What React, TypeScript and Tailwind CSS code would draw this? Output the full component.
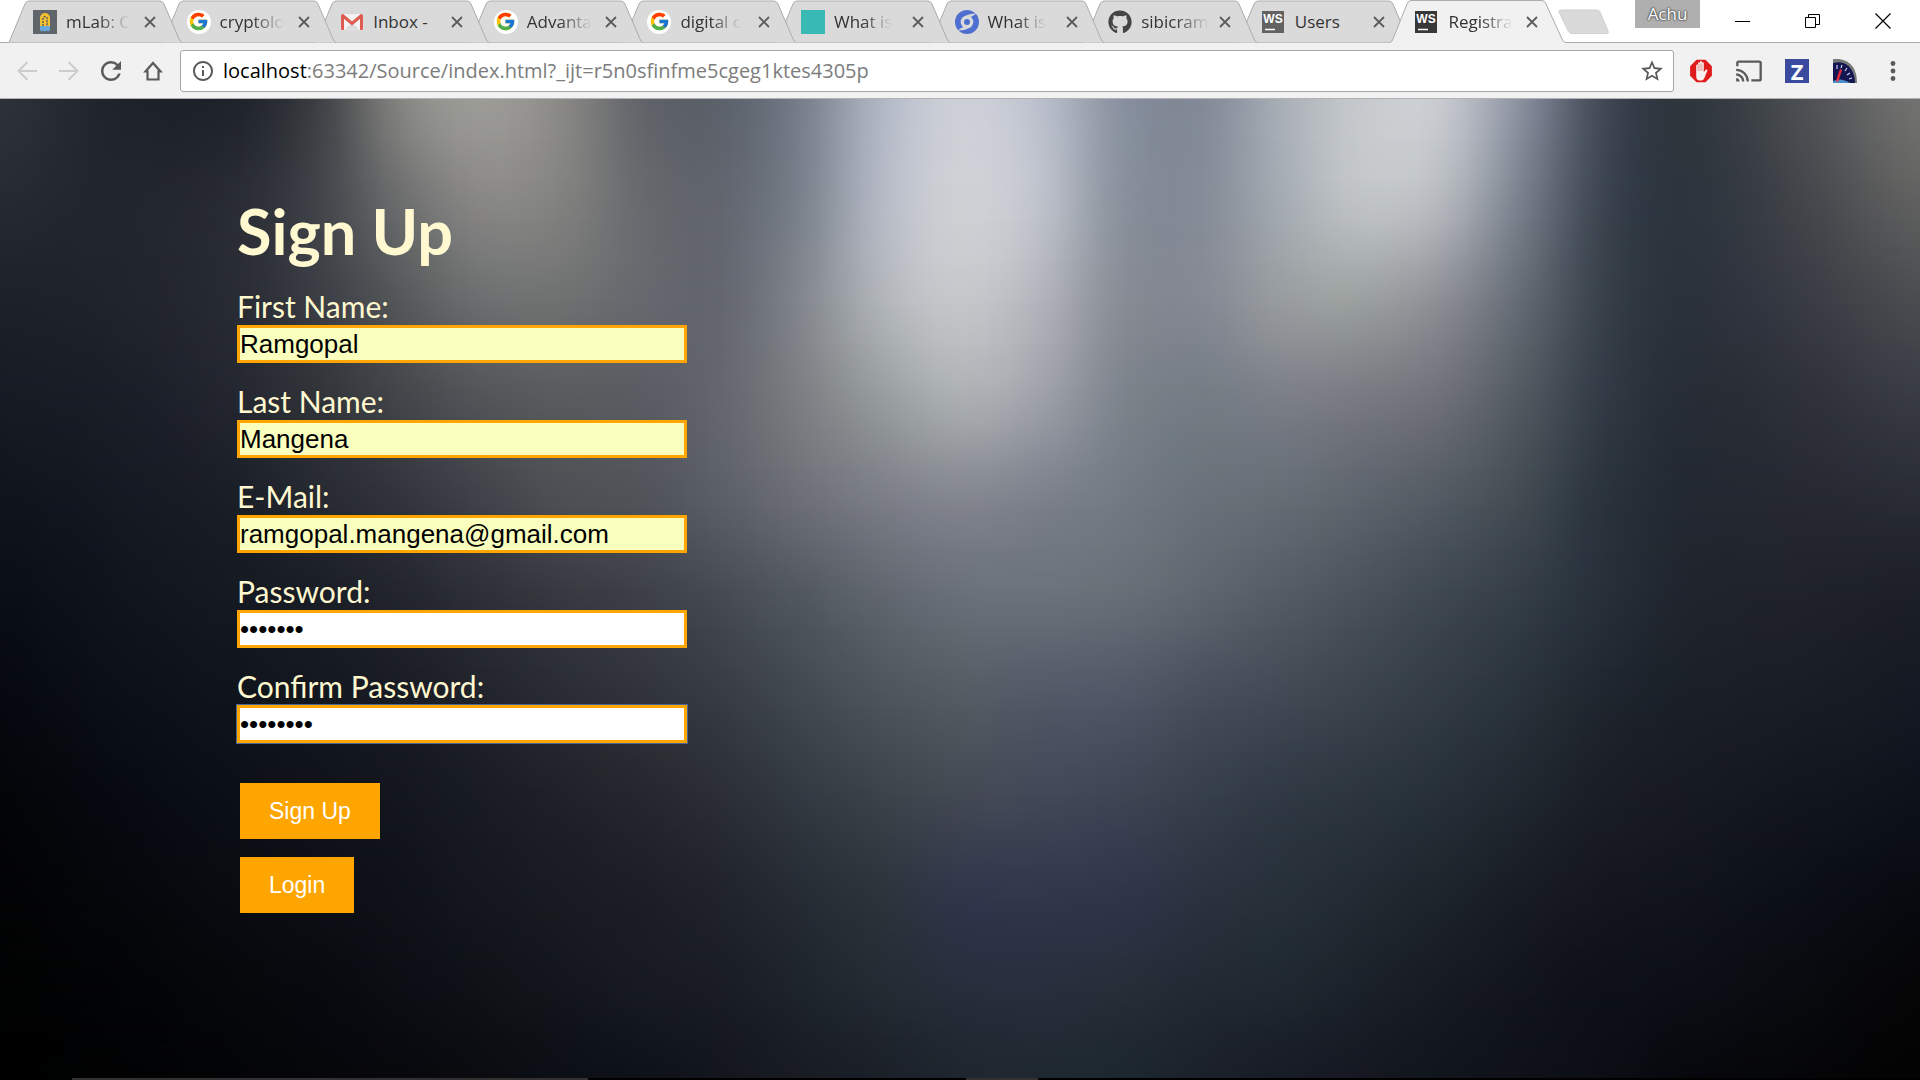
import type { CSSProperties, ReactNode } from "react";
import { FaGithub } from "react-icons/fa";
import { FcGoogle } from "react-icons/fc";
import { MdCast, MdInfoOutline, MdRefresh, MdStarBorder } from "react-icons/md";

/* Backdrop: a mesh of colours, smoothed across and down with a Catmull-Rom curve. */
const meshX = [0, 120, 240, 320, 400, 480, 560, 640, 720, 800, 880, 960, 1040, 1120, 1200, 1280, 1360, 1440, 1520, 1600, 1680, 1800, 1920];
const meshRows = [
  { y: 98, colors: "2e3239 1f232b 20242b 3e4145 858581 9d9c98 8b8a87 62656a 5c626b 767e8a b0b7c3 ced0d9 bbc0cc 8a92a0 828a98 a8aeb6 c6cacd c8cbd0 8b919f 434b58 2e363d 4c4f53 737371" },
  { y: 200, colors: "262a32 22262e 2a2d35 42454a 6c6d6e 888785 828280 686a6e 62666f 7a818b b4b9c4 cfd1d5 bfc3cc 8a929d 858c97 a4abb2 c0c4c6 b6babf 79818c 3d4651 2d353e 42454a 616160" },
  { y: 300, colors: "1d2129 20242c 292c34 3b3e44 555859 6c6e6f 6f7171 66696e 646770 82868d b0b4b9 c5c7ca b2b4bb 898d96 858993 989c9f 9ba09f 8c8e95 646b74 39424b 2b323c 383b43 4a4d50" },
  { y: 400, colors: "171b24 1a1e27 242730 313439 424549 515457 585b5c 595c62 64676e 7b7e82 969b9b abafb1 9ea1a9 7d848c 747c84 7a7e87 777981 6e7078 525a61 333c46 272d36 2e3139 383b44" },
  { y: 500, colors: "10141c 151922 1b1f27 272a32 31343b 40424a 4c4f53 505359 5b5f66 6c6f76 7a7d86 82858e 7b808a 727a83 69717a 656d75 5d646c 525a62 424b52 2b343d 232932 262932 292c35" },
  { y: 600, colors: "0a0e16 10141c 151921 1a1e26 22252d 2c2f36 35383f 3c3f46 454a52 51575e 5f656d 686f78 6a717a 666e76 5d656e 535b64 49515a 3e4750 343d46 27303a 20252d 1f2229 1c1f27" },
  { y: 700, colors: "060910 0c1017 10141c 14181f 191c24 21242b 292c33 30333a 373c43 41484f 4c545b 535b62 525866 505665 474e5b 414954 3a434c 323b44 29323a 1f262e 1b2028 191d25 151923" },
  { y: 800, colors: "030508 070a11 0c1017 10131a 13161e 191c23 1f2129 25272e 2b2e35 323941 3b4249 424852 424857 3e4453 363f4a 303943 2c353e 262f38 20272f 1a1e26 171a22 12161e 0e121a" },
  { y: 900, colors: "020304 05070b 090c11 0c0f15 0f1219 14171e 181b22 1c1e26 20232b 262c34 2c333b 30364a 31374a 2f354a 2b323f 273039 222a32 1d242b 181c24 14161f 11141c 0c0f17 080a10" },
  { y: 990, colors: "010202 030406 06080b 080a0f 0b0e14 0f1218 13161c 171a22 1a1d25 1e242c 242b33 272e3b 282f3d 262e38 222a34 1f2830 1b222a 171b22 12151d 0e1119 0c0f16 090b0f 060607" },
  { y: 1080, colors: "000000 010203 040507 06070a 08090d 0a0c10 0c0f16 0e121a 13161d 181c23 1b2028 1e262e 1f2830 1d2730 1b212a 181c26 151821 11151d 0f1219 0b0e15 08090e 050608 030304" },
].map((r) => ({ y: r.y, colors: r.colors.split(" ").map((c) => [0, 2, 4].map((k) => parseInt(c.slice(k, k + 2), 16))) }));

const meshTop = 98;
const meshBottom = 1080;
const meshWidth = 1920;

function curve(xs: number[], vs: number[][], x: number): number[] {
  let i = 0;
  while (i < xs.length - 2 && x > xs[i + 1]) i++;
  const t = (x - xs[i]) / (xs[i + 1] - xs[i]);
  const a = vs[Math.max(i - 1, 0)];
  const b = vs[i];
  const c = vs[i + 1];
  const d = vs[Math.min(i + 2, vs.length - 1)];
  return b.map((_, k) => {
    const v =
      b[k] +
      0.5 * t * (c[k] - a[k] + t * (2 * a[k] - 5 * b[k] + 4 * c[k] - d[k] + t * (3 * (b[k] - c[k]) + d[k] - a[k])));
    return Math.max(0, Math.min(255, v));
  });
}

const bands: CSSProperties[] = [];
const bandCount = 24;
for (let n = 0; n <= bandCount; n++) {
  const y = meshTop + ((meshBottom - meshTop) * n) / bandCount;
  const row = meshX.map((_, col) => curve(meshRows.map((r) => r.y), meshRows.map((r) => r.colors[col]), y));
  const stops: string[] = [];
  for (let x = 0; x <= meshWidth; x += 24) {
    const [r, g, b] = curve(meshX, row, x).map((v) => Math.round(v));
    stops.push(`rgb(${r} ${g} ${b}) ${((x / meshWidth) * 100).toFixed(2)}%`);
  }
  const style: CSSProperties = { backgroundImage: `linear-gradient(to right, ${stops.join(", ")})` };
  if (n > 0) {
    const from = (((n - 1) / bandCount) * 100).toFixed(3);
    const to = ((n / bandCount) * 100).toFixed(3);
    style.maskImage = `linear-gradient(to bottom, transparent ${from}%, black ${to}%)`;
  }
  bands.push(style);
}

function Backdrop() {
  return (
    <div aria-hidden="true" className="absolute inset-0 overflow-hidden">
      {bands.map((style, i) => (
        <div key={i} className="absolute inset-0" style={style} />
      ))}
    </div>
  );
}

/* Site icons */
function MLabIcon() {
  return (
    <svg viewBox="0 0 24 24" className="size-6">
      <rect width="24" height="24" fill="#5f656b" />
      <path d="M7 17V8a5 5 0 0 1 10 0v9z" fill="#f6c12f" />
      <path d="M10 16V8.500a2 2 0 0 1 4 0V16" fill="none" stroke="#59605f" strokeWidth="1.500" strokeDasharray="2 1" />
      <path d="M7 16h10v4l-1.500 1.500-1.500-1-2 1-2-1-1.500 1L7 20z" fill="#67a9dc" />
    </svg>
  );
}

function GoogleIcon() {
  return (
    <span className="flex size-6 items-center justify-center rounded-full bg-white">
      <FcGoogle size={21} />
    </span>
  );
}

function GmailIcon() {
  return (
    <svg viewBox="0 0 24 24" className="size-6">
      <path d="M2 4h20v16H2z" fill="#f3f1f1" />
      <path d="M5 19.500 12 13l7 6.500z" fill="#dcdada" />
      <path d="M2.500 5.500 12 13.500l9.500-8" fill="none" stroke="#dd5b50" strokeWidth="3" />
      <path d="M1 5.500Q1 4 3 4l1 1v15H2.500Q1 20 1 18.500zM23 5.500Q23 4 21 4l-1 1v15h1.500q1.500 0 1.500-1.500z" fill="#dd5b50" />
    </svg>
  );
}

function SwirlIcon() {
  return (
    <svg viewBox="0 0 24 24" className="size-6">
      <circle cx="12" cy="12" r="12" fill="#4f6fd0" />
      <path d="M21.500 3.500Q13 3.500 8.500 7L12 8.500Q16.500 7 21.500 3.500zM2.500 20.500Q11 20.500 15.500 17L12 15.500Q7.500 17 2.500 20.500z" fill="#dadada" />
      <circle cx="12" cy="12" r="6.300" fill="#dadada" />
      <circle cx="12" cy="12" r="3" fill="#4f6fd0" />
    </svg>
  );
}

function WebStormIcon({ active = false }: { active?: boolean }) {
  return (
    <svg viewBox="0 0 24 24" className="size-6">
      <rect y="1" width="22" height="22" fill={active ? "#383838" : "#626262"} />
      <text x="11" y="13" textAnchor="middle" fontFamily="Liberation Sans, sans-serif" fontWeight="700" fontSize="12" fill="#fff">
        WS
      </text>
      <path d="M3 19.500h10" stroke="#fff" strokeWidth="1.500" />
    </svg>
  );
}

const tabs: { title: string; icon: ReactNode; active?: boolean; fade?: boolean }[] = [
  { title: "mLab: C", icon: <MLabIcon />, fade: true },
  { title: "cryptolo", icon: <GoogleIcon />, fade: true },
  { title: "Inbox -", icon: <GmailIcon /> },
  { title: "Advanta", icon: <GoogleIcon />, fade: true },
  { title: "digital c", icon: <GoogleIcon />, fade: true },
  { title: "What is", icon: <span className="block size-6 bg-[#38b9b3]" />, fade: true },
  { title: "What is", icon: <SwirlIcon />, fade: true },
  { title: "sibicram", icon: <FaGithub size={24} color="#444" />, fade: true },
  { title: "Users", icon: <WebStormIcon /> },
  { title: "Registra", icon: <WebStormIcon active />, active: true, fade: true },
];

const stackOrder = ["z-[9]", "z-[8]", "z-[7]", "z-[6]", "z-[5]", "z-[4]", "z-[3]", "z-[2]", "z-[1]", "z-10"];

function Tab({ index }: { index: number }) {
  const { title, icon, active, fade } = tabs[index];
  return (
    <div className={`relative flex h-[43px] items-center pl-[25px] ${stackOrder[index]}`}>
      <svg viewBox="0 0 176 43" className="absolute left-0 top-0 h-[43px] w-44" aria-hidden="true">
        <path
          d={active ? "M0 43V42.500Q2 42 3 39L17 4Q18.500.5 21 .5H152Q154.500.5 156 4L172 39Q173.500 42.500 176 42.500V43z" : "M0 42.500Q1 42 2 39L17 4Q18.500 1 21 1H152Q154.500 1 156 4L171 39Q173 42.500 175 42.500z"}
          fill={active ? "#f1f1f1" : "#dadada"}
        />
        <path
          d={active ? "M0 42.500Q2 42 3 39L17 4Q18.500.5 21 .5H152Q154.500.5 156 4L172 39Q173.500 42.500 176 42.500" : "M1 42.500L17 4Q18.500 1 21 1H152Q154.500 1 156 4L171 39Q172.500 42.500 174 42.500"}
          fill="none"
          stroke="#acacac"
        />
      </svg>
      <span className="relative shrink-0">{icon}</span>
      <span className="relative ml-[9px] flex w-[74px] whitespace-nowrap text-[17px] leading-6 text-[#333]">
        <span className={fade ? "[mask-image:linear-gradient(to_right,black_50%,transparent)]" : ""}>{title}</span>
      </span>
      <button type="button" aria-label={`Close ${title}`} className="relative flex size-5 shrink-0 items-center justify-center">
        <svg viewBox="0 0 12 12" className="size-3" stroke="#5c5c5c" strokeWidth="1.800">
          <path d="M1 1l10 10M11 1L1 11" />
        </svg>
      </button>
    </div>
  );
}

function TabStrip() {
  return (
    <div className="relative flex h-[43px] border-b border-[#acacac] bg-white">
      <div className="ml-2 grid h-[43px] w-4/5 shrink-0 grid-cols-10">
        {tabs.map((_, i) => (
          <Tab key={i} index={i} />
        ))}
      </div>
      <button type="button" aria-label="New tab" className="ml-[14px] mt-[9px] h-[26px] w-[52px]">
        <svg viewBox="0 0 52 26" className="h-[26px] w-[52px]">
          <path d="M3 1h36q2 0 3 2l8 19q1 2.500-1 2.500H14q-2.500 0-3.500-2L1 3Q.5 1 3 1z" fill="#dadada" stroke="#cfcfcf" />
        </svg>
      </button>
      <div className="ml-auto flex items-start pr-0.5">
        <button
          type="button"
          className="mr-2 h-7 w-[65px] bg-[#afafaf] text-[17px] leading-[26px] text-white [text-shadow:0_0_2px_#333,0_0_2px_#333]"
        >
          Achu
        </button>
        <button type="button" aria-label="Minimize" className="flex h-[41px] w-[70px] items-center justify-center">
          <svg viewBox="0 0 16 16" className="size-4" shapeRendering="crispEdges">
            <path d="M0 8h15v1H0z" />
          </svg>
        </button>
        <button type="button" aria-label="Restore" className="flex h-[41px] w-[70px] items-center justify-center">
          <svg viewBox="0 0 16 16" className="size-4" fill="none" stroke="#000">
            <path d="M.5 4.500h10v10H.5zM3.500 4V1.500h11v10H11" />
          </svg>
        </button>
        <button type="button" aria-label="Close window" className="flex h-[41px] w-[70px] items-center justify-center">
          <svg viewBox="0 0 16 16" className="size-4" fill="none" stroke="#000" strokeWidth="1.200">
            <path d="M.5.5l15 15M15.500.5l-15 15" />
          </svg>
        </button>
      </div>
    </div>
  );
}

function BarButton({ label, wide = false, children }: { label: string; wide?: boolean; children: ReactNode }) {
  return (
    <button type="button" aria-label={label} className={`flex h-10 shrink-0 items-center justify-center text-[#5a5a5a] ${wide ? "w-12" : "w-[42px]"}`}>
      {children}
    </button>
  );
}

function Toolbar() {
  return (
    <div className="flex h-14 items-center border-b border-[#b2b1b3] bg-[#f1f1f1] pl-1.5 pr-[3px]">
      <BarButton label="Back">
        <svg viewBox="0 0 20 20" className="size-5" fill="none" stroke="#ccc" strokeWidth="2">
          <path d="M20 10H1.500M10.500 1l-9 9 9 9" />
        </svg>
      </BarButton>
      <BarButton label="Forward">
        <svg viewBox="0 0 20 20" className="size-5" fill="none" stroke="#ccc" strokeWidth="2">
          <path d="M0 10h18.500M9.500 1l9 9-9 9" />
        </svg>
      </BarButton>
      <BarButton label="Reload">
        <MdRefresh size={30} />
      </BarButton>
      <BarButton label="Home">
        <svg viewBox="0 0 20 20" className="size-5" fill="none" stroke="#5a5a5a" strokeWidth="2.200">
          <path d="M10 2 2.500 10.500H4.500V18.500H15.500V10.500H17.500z" />
        </svg>
      </BarButton>
      <div className="relative ml-1.5 mr-[3px] flex h-[42px] flex-1 items-center rounded-[3px] border border-[#a6a6a6] bg-white pl-2.5 pr-2">
        <MdInfoOutline size={24} color="#5a5a5a" className="shrink-0" />
        <a href="#page" className="ml-2 flex-1 whitespace-nowrap text-[20px] leading-7 text-[#7c7c7c]">
          <span className="text-black">localhost</span>:63342/Source/index.html?_ijt=r5n0sfinfme5cgeg1ktes4305p
        </a>
        <button type="button" aria-label="Bookmark this page">
          <MdStarBorder size={26} color="#5a5a5a" />
        </button>
      </div>
      <BarButton label="Ad blocker" wide>
        <svg viewBox="0 0 24 24" className="size-6">
          <path d="M7.500.8h9l6.400 6.400v9.600l-6.400 6.400h-9L1.100 16.800V7.200z" fill="#e01b1b" />
          <path
            d="M7.200 13V6.500a.9.900 0 0 1 1.900 0V4.300a.9.900 0 0 1 1.900 0V3a.9.900 0 0 1 1.900 0v1.300a.9.900 0 0 1 1.900 0v9l1.700-2.400c.9-1 2.200-.3 1.800.8l-2.900 7.300q-1 2.500-3.300 2.500h-1.300q-3.600 0-3.600-4.500z"
            fill="#f6f1f0"
          />
          <path d="M9.100 6v6M11 4.500V12M12.900 4.500V12" stroke="#dc5a55" strokeWidth=".6" />
        </svg>
      </BarButton>
      <BarButton label="Cast" wide>
        <MdCast size={28} />
      </BarButton>
      <BarButton label="Zotero" wide>
        <span className="flex size-6 items-center justify-center bg-[#3a4a9f] text-[22px] font-bold leading-6 text-white">Z</span>
      </BarButton>
      <BarButton label="Speed dial" wide>
        <svg viewBox="0 0 24 24" className="size-6">
          <path d="M0 0h6Q15 1 20 8q4 6 4 16H0z" fill="#767b78" />
          <path d="M0 4Q12 1 18 10q4 6 4 14H0z" fill="#15164f" />
          <path d="M0 22q8-4 17 2H0z" fill="#4b91c9" />
          <path d="M3 22 7 10l2 1-4 12z" fill="#ee2c3c" />
          <path d="M4 6v4M9 6l-1 3M14 9l-2 3M17 14l-3 2M19 19l-3 1" stroke="#c9cdf0" strokeWidth="1.200" />
        </svg>
      </BarButton>
      <BarButton label="Menu" wide>
        <svg viewBox="0 0 6 22" className="h-[22px] w-1.5" fill="#5a5a5a">
          <circle cx="3" cy="3.500" r="2.400" />
          <circle cx="3" cy="11" r="2.400" />
          <circle cx="3" cy="18.500" r="2.400" />
        </svg>
      </BarButton>
    </div>
  );
}

const fields = [
  { id: "first-name", label: "First Name:", type: "text", value: "Ramgopal", tone: "bg-[#faffbd]" },
  { id: "last-name", label: "Last Name:", type: "text", value: "Mangena", tone: "bg-[#faffbd]" },
  { id: "email", label: "E-Mail:", type: "text", value: "ramgopal.mangena@gmail.com", tone: "bg-[#faffbd]" },
  { id: "password", label: "Password:", type: "password", value: "1234567", tone: "bg-white" },
  { id: "confirm", label: "Confirm Password:", type: "password", value: "12345678", tone: "bg-white shadow-[0_0_0_1px_#4a6694]" },
];

function SignUpForm() {
  return (
    <form className="relative ml-[237px] w-[450px] pt-24" onSubmit={(e) => e.preventDefault()}>
      <h1 className="font-['Comic_Sans_MS',Lato,sans-serif] text-[63px] font-bold leading-[72px] text-[#fff8d0]">Sign Up</h1>
      <div className="mt-5 flex flex-col gap-[19px]">
        {fields.map((f) => (
          <div key={f.id} className="flex flex-col">
            <label htmlFor={f.id} className="font-['Comic_Sans_MS',Lato,sans-serif] text-[30px] leading-[38px] text-[#fff8d0]">
              {f.label}
            </label>
            <input
              id={f.id}
              type={f.type}
              defaultValue={f.value}
              className={`h-[38px] w-full border-[3px] border-[#ffa500] p-0 text-[26px] leading-8 text-black outline-none ${f.tone} font-['Liberation_Sans',Arial,sans-serif]`}
            />
          </div>
        ))}
      </div>
      <div className="ml-[3px] mt-10 flex flex-col items-start gap-[18px] font-['Liberation_Sans',Arial,sans-serif] text-[23px] leading-6 text-white">
        <button type="submit" className="bg-[#ffa500] px-[29px] py-4">
          Sign Up
        </button>
        <button type="button" className="bg-[#ffa500] px-[29px] py-4">
          Login
        </button>
      </div>
    </form>
  );
}

export default function App() {
  return (
    <div className="flex min-h-screen flex-col bg-black font-['Open_Sans','Noto_Sans',sans-serif]">
      <TabStrip />
      <Toolbar />
      <main id="page" className="relative flex-1">
        <Backdrop />
        <SignUpForm />
      </main>
      <div aria-hidden="true" className="flex h-0.5 bg-black">
        <div className="ml-[72px] w-[516px] bg-[#333031]" />
        <div className="ml-[378px] w-[72px] bg-[#333031]" />
      </div>
    </div>
  );
}
